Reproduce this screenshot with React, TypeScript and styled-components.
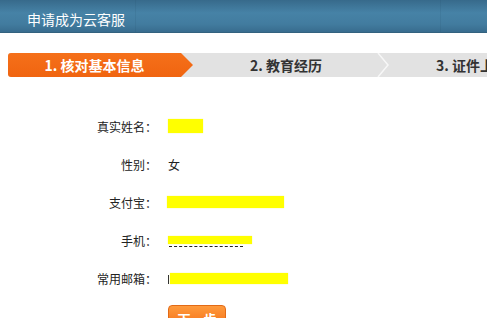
import styled, { createGlobalStyle } from 'styled-components';

const GlobalStyle = createGlobalStyle`
	html, body {
		margin: 0;
		padding: 0;
		background: #ffffff;
	}
	body {
		font-family: 'Noto Sans CJK SC', 'Liberation Sans', sans-serif;
		color: #333333;
	}
`;

interface StepItem {
	label: string;
	width: number;
	active?: boolean;
}

const steps: StepItem[] = [
	{ label: '1. 核对基本信息', width: 185, active: true },
	{ label: '2. 教育经历', width: 192 },
	{ label: '3. 证件上传', width: 180 },
];

interface FieldItem {
	label: string;
	value?: string;
	mark?: { width: number; height: number; offset?: number; dashes?: boolean; stub?: boolean };
}

const fields: FieldItem[] = [
	{ label: '真实姓名：', mark: { width: 35, height: 14 } },
	{ label: '性别：', value: '女' },
	{ label: '支付宝：', mark: { width: 117, height: 12, offset: -1 } },
	{ label: '手机：', mark: { width: 84, height: 8, dashes: true } },
	{ label: '常用邮箱：', mark: { width: 118, height: 11, offset: 2, stub: true } },
];

export default function App() {
	return (
		<>
			<GlobalStyle />
			<StyledPage>
				<StyledHeader>
					<span>申请成为云客服</span>
				</StyledHeader>
				<StyledSteps>
					{steps.map(step => (
						<StyledStep key={step.label} $active={step.active} $width={step.width}>
							{step.label}
							{!step.active && (
								<svg className='sep' width='12' height='24' viewBox='0 0 12 24'>
									<polyline points='1,0 11,12 1,24' fill='none' stroke='#f7f7f7' strokeWidth='1.5' />
								</svg>
							)}
						</StyledStep>
					))}
				</StyledSteps>
				<StyledForm>
					{fields.map(field => (
						<StyledRow key={field.label}>
							<StyledLabel>{field.label}</StyledLabel>
							<StyledValue>
								{field.value}
								{field.mark && (
									<StyledMark
										$width={field.mark.width}
										$height={field.mark.height}
										$offset={field.mark.offset ?? 0}
										$dashes={field.mark.dashes}
										$stub={field.mark.stub}
									/>
								)}
							</StyledValue>
						</StyledRow>
					))}
					<StyledRow>
						<span />
						<StyledButton>下一步</StyledButton>
					</StyledRow>
				</StyledForm>
			</StyledPage>
		</>
	);
}

const StyledPage = styled.div`
	width: 487px;
	height: 318px;
	overflow: hidden;
`;

const StyledHeader = styled.div`
	position: relative;
	height: 33px;
	box-sizing: border-box;
	padding: 6px 0 0 27px;
	line-height: 27px;
	font-size: 14px;
	color: #ffffff;
	background: linear-gradient(#376a8b 0%, #4682a6 40%, #427c9f 75%, #386c8e 100%);
	border-bottom: 1px solid #33627f;
	&::before,
	&::after {
		content: '';
		position: absolute;
		top: 0;
		bottom: 0;
		width: 1px;
		background: rgba(30, 70, 100, 0.12);
	}
	&::before {
		left: 135px;
	}
	&::after {
		left: 440px;
	}
`;

const StyledSteps = styled.div`
	display: flex;
	margin: 20px 0 0 8px;
	height: 24px;
	background: #e2e2e2;
	overflow: hidden;
	border-radius: 3px 0 0 3px;
`;

const StyledStep = styled.div<{ $active?: boolean; $width: number }>`
	position: relative;
	flex: 0 0 ${p => p.$width}px;
	box-sizing: border-box;
	padding-right: ${p => (p.$active ? 12 : 6)}px;
	display: flex;
	align-items: center;
	justify-content: center;
	font-size: 14px;
	font-weight: bold;
	white-space: nowrap;
	color: ${p => (p.$active ? '#ffffff' : '#333333')};
	background: ${p => (p.$active ? 'linear-gradient(#f5701a, #f06410)' : 'transparent')};
	clip-path: ${p =>
		p.$active ? 'polygon(0 0, 173px 0, 185px 50%, 173px 100%, 0 100%)' : 'none'};
	.sep {
		position: absolute;
		right: -4px;
		top: 0;
	}
`;

const StyledForm = styled.div`
	display: flex;
	flex-direction: column;
	padding-top: 30px;
`;

const StyledRow = styled.div`
	display: grid;
	grid-template-columns: 157px auto;
	column-gap: 11px;
	align-items: center;
	height: 38px;
	font-size: 12px;
	&:last-child {
		height: auto;
		align-items: start;
		margin-top: 8px;
	}
`;

const StyledLabel = styled.span`
	text-align: right;
	color: #222222;
`;

const StyledValue = styled.span`
	display: flex;
	align-items: center;
	color: #222222;
`;

const StyledMark = styled.span<{
	$width: number;
	$height: number;
	$offset: number;
	$dashes?: boolean;
	$stub?: boolean;
}>`
	position: relative;
	display: inline-block;
	width: ${p => p.$width}px;
	height: ${p => p.$height}px;
	margin-left: ${p => p.$offset}px;
	background: #ffff00;
	box-shadow: 0 0 1px #f4f27a;
	&::after {
		content: '';
		display: ${p => (p.$dashes ? 'block' : 'none')};
		position: absolute;
		left: 1px;
		width: 74px;
		top: ${p => p.$height + 2}px;
		border-top: 1px dashed #222222;
	}
	&::before {
		content: '';
		display: ${p => (p.$stub ? 'block' : 'none')};
		position: absolute;
		left: -2px;
		top: 2px;
		width: 1px;
		height: 9px;
		background: #333333;
	}
`;

const StyledButton = styled.span`
	display: inline-flex;
	align-items: center;
	justify-content: center;
	width: 58px;
	height: 26px;
	border-radius: 4px;
	border: 1px solid #e26a16;
	box-sizing: border-box;
	background: linear-gradient(#ff9a3c, #f26a12);
	color: #ffffff;
	font-size: 13px;
	font-weight: bold;
`;
